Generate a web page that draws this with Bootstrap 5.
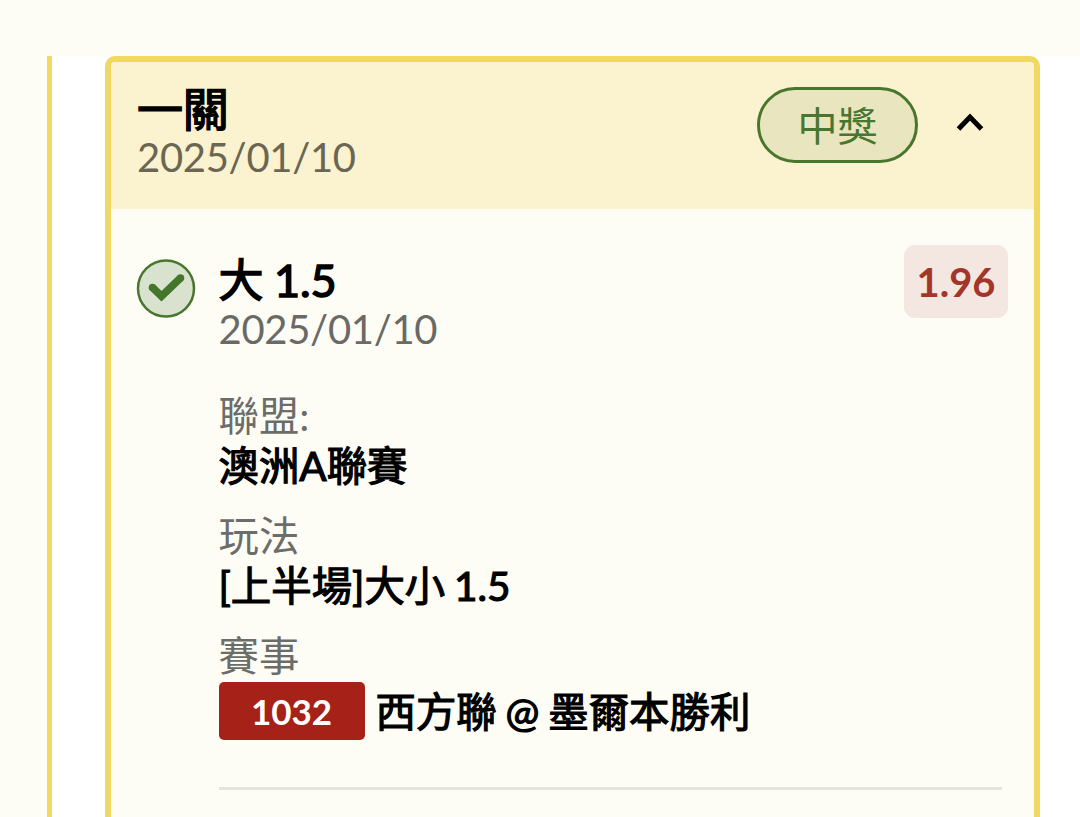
<!DOCTYPE html>
<html lang="zh-Hant">
<head>
    <meta charset="UTF-8">
    <meta name="viewport" content="width=device-width, initial-scale=1.0">
    <title>一關</title>
    <link href="https://cdn.jsdelivr.net/npm/bootstrap@5.3.0/dist/css/bootstrap.min.css" rel="stylesheet">
    <style>
        body {
            font-family: Lato, "Noto Sans CJK TC", sans-serif;
            font-size: 40px;
            line-height: 50px;
            background: #fefdf5;
            color: #000;
            height: 817px;
            overflow: hidden;
        }
        .bet-panel {
            margin: 56px 0 0 47px;
            padding: 0 40px 0 53px;
            height: 780px;
            background: #fff;
            border-left: 5px solid #f2d95f;
        }
        .bet-card {
            height: 800px;
            border: 6px solid #f0d862;
            border-radius: 10px;
            background: #fefdf5;
            overflow: hidden;
        }
        .bet-header {
            height: 147px;
            padding: 22px 48px 0 26px;
            background: #fbf2cf;
        }
        .bet-title {
            font-size: 46px;
            line-height: 49px;
            padding-bottom: 1px;
            letter-spacing: -.2px;
            word-spacing: -.5px;
            -webkit-text-stroke: 1.5px #000;
        }
        .bet-header .bet-date { color: #6b6653; }
        .bet-date {
            color: #696966;
            line-height: 46px;
            letter-spacing: -.3px;
        }
        .win-pill {
            width: 161px;
            height: 76px;
            margin-top: 3px;
            padding-top: 2px;
            border: 3px solid #48762f;
            background: #e9e5be;
            color: #48762f;
        }
        .arrow-icon { margin: 26px 0 0 36px; }
        .bet-body { padding: 36px 26px 0 25px; }
        .check-icon { margin: 13px 22.5px 0 0; }
        .item-head { padding-top: 11px; }
        .item-head .bet-title { font-size: 45px; }
        .odds-box {
            width: 104px;
            height: 73px;
            border-radius: 11px;
            background: #f4e6e0;
            color: #a23628;
        }
        .bet-fields { margin-top: 39px; }
        .bet-field { margin-bottom: 20px; }
        .bet-label {
            color: #6c6c69;
            font-size: 40.4px;
        }
        .bet-value {
            font-size: 40.4px;
            word-spacing: -1.4px;
            -webkit-text-stroke: 1.2px #000;
        }
        .match-no {
            width: 146px;
            height: 58px;
            margin: 1px 11px 0 0;
            border-radius: 5px;
            background: #a62117;
            color: #fff;
            font-size: 35px;
            font-weight: 700;
        }
        .match-name { padding-top: 2px; }
        .bet-line {
            height: 3px;
            margin: 47px 6px 0 0;
            background: #e4e3dc;
        }
    </style>
</head>
<body>
    <div class="bet-panel">
        <div class="bet-card">
            <div class="bet-header d-flex align-items-start">
                <div class="me-auto">
                    <div class="bet-title">一關</div>
                    <div class="bet-date">2025/01/10</div>
                </div>
                <div class="win-pill rounded-pill d-flex align-items-center justify-content-center">中獎</div>
                <svg class="arrow-icon" width="32" height="24" viewBox="0 0 32 24" fill="none" stroke="#000" stroke-width="5">
                    <path d="M4.5 19L16 7L27.5 19"/>
                </svg>
            </div>

            <div class="bet-body d-flex align-items-start">
                <svg class="check-icon flex-shrink-0" width="60" height="60" viewBox="0 0 60 60" fill="none">
                    <circle cx="30" cy="30.5" r="28" fill="#d9e2cf" stroke="#48762f" stroke-width="2.5"/>
                    <path d="M16.5 29.5L25.5 38.3L44.5 20" stroke="#43762b" stroke-width="7.6"/>
                    <circle cx="16.5" cy="29.5" r="3.8" fill="#43762b"/>
                    <circle cx="44.5" cy="20" r="3.8" fill="#43762b"/>
                </svg>
                <div class="flex-grow-1">
                    <div class="d-flex justify-content-between">
                        <div class="item-head">
                            <div class="bet-title">大 1.5</div>
                            <div class="bet-date">2025/01/10</div>
                        </div>
                        <div class="odds-box fw-bold d-flex align-items-center justify-content-center">1.96</div>
                    </div>
                    <div class="bet-fields">
                        <div class="bet-field">
                            <div class="bet-label">聯盟:</div>
                            <div class="bet-value">澳洲A聯賽</div>
                        </div>
                        <div class="bet-field">
                            <div class="bet-label">玩法</div>
                            <div class="bet-value">[上半場]大小 1.5</div>
                        </div>
                        <div class="bet-label">賽事</div>
                        <div class="d-flex align-items-center">
                            <span class="match-no d-flex align-items-center justify-content-center">1032</span>
                            <span class="match-name bet-value">西方聯 @ 墨爾本勝利</span>
                        </div>
                    </div>
                    <div class="bet-line"></div>
                </div>
            </div>
        </div>
    </div>

    <script src="https://cdn.jsdelivr.net/npm/bootstrap@5.3.0/dist/js/bootstrap.bundle.min.js"></script>
</body>
</html>
